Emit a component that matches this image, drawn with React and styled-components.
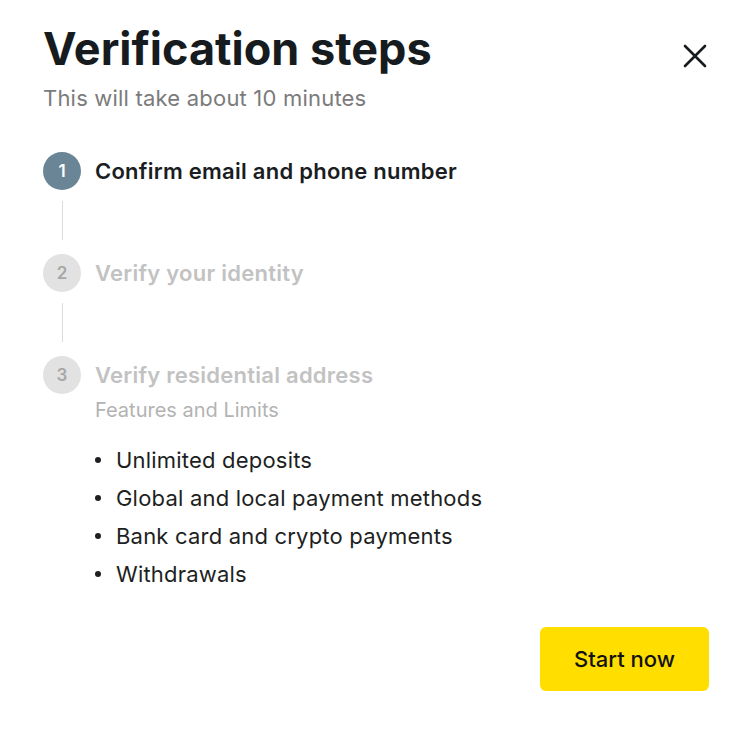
import React from "react"
import styled, { createGlobalStyle } from "styled-components"

const GlobalStyle = createGlobalStyle`
  html, body {
    margin: 0;
    padding: 0;
    background: #fff;
  }
  body {
    font-family: Inter, "Noto Sans", sans-serif;
    -webkit-font-smoothing: antialiased;
  }
`

const Modal = styled.div`
  width: 752px;
  height: 734px;
  box-sizing: border-box;
  padding: 22px 43px 0 43px;
  display: flex;
  flex-direction: column;
`

const Header = styled.div`
  display: flex;
  justify-content: space-between;
  align-items: flex-start;
`

const Title = styled.h1`
  margin: 0;
  font-family: Inter, sans-serif;
  font-size: 45px;
  font-weight: 700;
  letter-spacing: 0;
  line-height: 54px;
  color: #161b20;
`

const Subtitle = styled.p`
  margin: 10px 0 0;
  font-size: 22px;
  letter-spacing: 0.2px;
  line-height: 24px;
  color: #7b7b7b;
`

const CloseButton = styled.button`
  border: 0;
  background: none;
  padding: 0;
  margin: 19px -1px 0 0;
  width: 30px;
  height: 30px;
  display: flex;
  align-items: center;
  justify-content: center;
  cursor: pointer;
`

const Steps = styled.div`
  margin-top: 42px;
  display: flex;
  flex-direction: column;
`

const StepRow = styled.div`
  display: flex;
  align-items: center;
  gap: 14px;
`

const Circle = styled.div`
  width: 38px;
  height: 38px;
  border-radius: 50%;
  flex-shrink: 0;
  display: flex;
  align-items: center;
  justify-content: center;
  font-size: 17px;
  font-weight: 600;
  background: ${(p) => (p.$active ? "#6a8596" : "#e2e2e2")};
  color: ${(p) => (p.$active ? "#fff" : "#a7a7a7")};
`

const StepLabel = styled.div`
  font-size: 22px;
  letter-spacing: 0.25px;
  font-weight: 600;
  color: ${(p) => (p.$active ? "#1a1d21" : "#c2c2c2")};
`

const Connector = styled.div`
  width: 38px;
  height: 64px;
  display: flex;
  justify-content: center;
  padding: 11px 0 14px;
  box-sizing: border-box;
  &::before {
    content: "";
    width: 1px;
    background: #dcdcdc;
  }
`

const Details = styled.div`
  padding-left: 52px;
  margin-top: 6px;
`

const DetailsCaption = styled.div`
  font-size: 20px;
  line-height: 20px;
  color: #b3b3b3;
`

const FeatureList = styled.ul`
  list-style: none;
  margin: 21px 0 0;
  padding: 0;
`

const Feature = styled.li`
  position: relative;
  padding-left: 21px;
  font-size: 22px;
  letter-spacing: 0.2px;
  line-height: 38px;
  color: #1d1f22;
  &::before {
    content: "";
    position: absolute;
    left: 0;
    top: 16px;
    width: 6px;
    height: 6px;
    border-radius: 50%;
    background: #1d1f22;
  }
`

const Footer = styled.div`
  display: flex;
  justify-content: flex-end;
  margin-top: 34px;
`

const PrimaryButton = styled.button`
  width: 169px;
  height: 64px;
  border: 0;
  border-radius: 6px;
  background: #ffde00;
  color: #121212;
  font-family: Inter, sans-serif;
  font-size: 22px;
  font-weight: 500;
  cursor: pointer;
`

const steps = [
  { n: 1, label: "Confirm email and phone number", active: true },
  { n: 2, label: "Verify your identity" },
  { n: 3, label: "Verify residential address" },
]

const features = [
  "Unlimited deposits",
  "Global and local payment methods",
  "Bank card and crypto payments",
  "Withdrawals",
]

export default function App() {
  return (
    <>
      <GlobalStyle />
      <Modal>
        <Header>
          <div>
            <Title>Verification steps</Title>
            <Subtitle>This will take about 10 minutes</Subtitle>
          </div>
          <CloseButton aria-label="Close">
            <svg width="24" height="24" viewBox="0 0 24 24">
              <path d="M2 2 L22 22 M22 2 L2 22" stroke="#161b20" strokeWidth="2.6" strokeLinecap="round" />
            </svg>
          </CloseButton>
        </Header>

        <Steps>
          {steps.map((s, i) => (
            <React.Fragment key={s.n}>
              {i > 0 && <Connector />}
              <StepRow>
                <Circle $active={s.active}>{s.n}</Circle>
                <StepLabel $active={s.active}>{s.label}</StepLabel>
              </StepRow>
            </React.Fragment>
          ))}
          <Details>
            <DetailsCaption>Features and Limits</DetailsCaption>
            <FeatureList>
              {features.map((f) => (
                <Feature key={f}>{f}</Feature>
              ))}
            </FeatureList>
          </Details>
        </Steps>

        <Footer>
          <PrimaryButton>Start now</PrimaryButton>
        </Footer>
      </Modal>
    </>
  )
}
